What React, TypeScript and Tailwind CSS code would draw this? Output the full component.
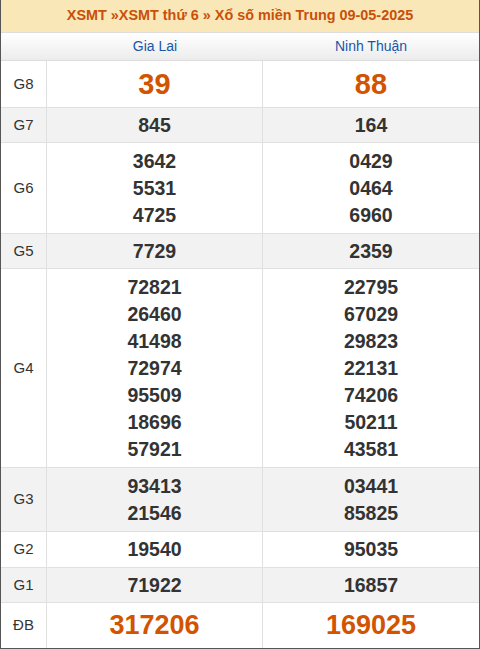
const stations = ["Gia Lai", "Ninh Thuận"];

type Prize = { label: string; h: string; big?: boolean; gray?: boolean; values: string[][] };

const prizes: Prize[] = [
  { label: "G8", h: "h-[47px]", big: true, values: [["39"], ["88"]] },
  { label: "G7", h: "h-[35px]", gray: true, values: [["845"], ["164"]] },
  { label: "G6", h: "h-[91px]", values: [["3642", "5531", "4725"], ["0429", "0464", "6960"]] },
  { label: "G5", h: "h-[35px]", gray: true, values: [["7729"], ["2359"]] },
  {
    label: "G4",
    h: "h-[199px]",
    values: [
      ["72821", "26460", "41498", "72974", "95509", "18696", "57921"],
      ["22795", "67029", "29823", "22131", "74206", "50211", "43581"],
    ],
  },
  { label: "G3", h: "h-[64px]", gray: true, values: [["93413", "21546"], ["03441", "85825"]] },
  { label: "G2", h: "h-[36px]", values: [["19540"], ["95035"]] },
  { label: "G1", h: "h-[35px]", gray: true, values: [["71922"], ["16857"]] },
  { label: "ĐB", h: "h-[45px]", big: true, values: [["317206"], ["169025"]] },
];

export default function App() {
  return (
    <div className="w-[480px] font-['Liberation_Sans',Arial,sans-serif] text-[#333]">
      <div className="border-x border-b border-[#555]">
        <div className="flex h-[33px] items-center justify-center border-b border-[#ddd] bg-[#f9e7b7] text-[14.4px] font-bold text-[#c9500a]">
          XSMT »XSMT thứ 6 » Xổ số miền Trung 09-05-2025
        </div>
        <div className="grid h-[28px] grid-cols-[46px_1fr_1fr] border-b border-[#ddd] bg-gradient-to-b from-white to-[#ececec] text-[14px] text-[#1a56a8]">
          <div />
          {stations.map((s) => (
            <div key={s} className="flex items-center justify-center">
              {s}
            </div>
          ))}
        </div>
        {prizes.map((p, i) => (
          <div
            key={p.label}
            className={`grid grid-cols-[46px_1fr_1fr] ${p.h} ${i < prizes.length - 1 ? "border-b border-[#e0e0e0]" : ""} ${p.gray ? "bg-[#f2f2f2]" : "bg-white"}`}
          >
            <div className="flex items-center justify-center border-r border-[#e0e0e0] text-[15px]">{p.label}</div>
            {p.values.map((col, j) => (
              <div
                key={j}
                className={`flex flex-col items-center justify-center ${j === 0 ? "border-r border-[#e0e0e0]" : ""}`}
              >
                {col.map((n) => (
                  <span
                    key={n}
                    className={
                      p.big
                        ? `font-bold leading-[27px] text-[#d25400] ${p.label === "G8" ? "text-[29px]" : "text-[27px]"}`
                        : "text-[19.5px] font-bold leading-[27px] text-[#333]"
                    }
                  >
                    {n}
                  </span>
                ))}
              </div>
            ))}
          </div>
        ))}
      </div>
    </div>
  );
}
